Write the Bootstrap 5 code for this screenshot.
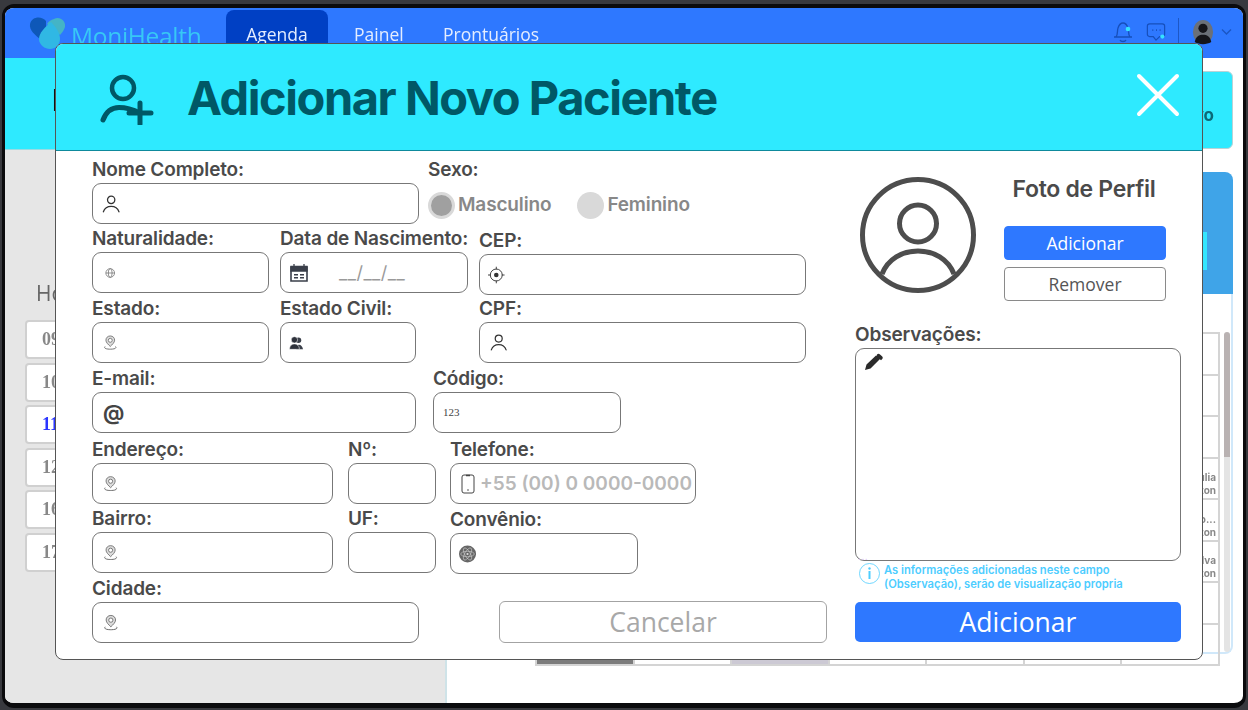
<!DOCTYPE html>
<html lang="pt-BR">
<head>
    <meta charset="UTF-8">
    <meta name="viewport" content="width=device-width, initial-scale=1.0">
    <title>Adicionar Novo Paciente</title>
    <link href="https://cdn.jsdelivr.net/npm/bootstrap@5.3.0/dist/css/bootstrap.min.css" rel="stylesheet">
    <style>
        html, body { height: 100%; }
        body { background: #38393e; overflow: hidden; padding: 4px 2px 2px 2px; font-family: "Inter", sans-serif; }

        /* tela de fundo */
        .screen-frame { position: relative; width: 1244px; height: 704px; border: 3px solid #0b0b0d; border-top-width: 4px; border-bottom-width: 5px; border-radius: 12px; background: #fff; overflow: hidden; }
        .back-layer { height: 100%; filter: blur(.6px); }
        .top-bar { height: 50px; background: #2e78ff; font-family: "Open Sans", sans-serif; font-size: 17.5px; color: #e4edff; }
        .brand-text { font-size: 24.5px; color: #37c8f5; letter-spacing: -.3px; margin-left: 5px; width: 155px; padding-top: 6px; }
        .tab-link { height: 100%; padding-top: 13px; }
        .tab-on { width: 102px; text-align: center; background: #0040c4; border-radius: 8px 8px 0 0; margin-top: 2px; padding-top: 11px; }
        .tab-off1 { margin-left: 26px; width: 89px; }
        .tab-off2 { width: 110px; }
        .top-tools { margin-left: auto; padding: 0 11px 2px 0; height: 100%; }
        .tool-chat { margin-left: 12px; }
        .tool-sep { width: 1px; height: 28px; background: #1d57c6; margin: 0 13px 0 12px; }
        .tool-arrow { margin-left: 7px; }
        .back-body { height: calc(100% - 50px); }
        .side-panel { width: 442px; background: #e6e6e6; border-right: 2px solid #cfe3e8; }
        .side-head { height: 92px; background: #2eeaff; padding: 27px 0 0 47px; color: #111; font-size: 30px; line-height: 30px; font-weight: 700; border-bottom: 1px solid #9adbe3; }
        .side-title { padding: 128px 0 0 31px; font-family: "Open Sans", sans-serif; font-size: 21px; line-height: 30px; color: #666; height: 170px; }
        .slot-list { padding-left: 20px; gap: 3.5px; }
        .slot-item { width: 130px; height: 39px; background: #fff; border: 2px solid #d0d0d0; border-radius: 4px; padding-left: 15px; font-family: "Liberation Serif", serif; font-size: 18px; line-height: 35px; font-weight: 700; color: #888; }
        .slot-now { color: #2a35ff; }
        .main-panel { flex: 1; padding: 13px 10px 0 0; }
        .back-card { height: 78px; margin-left: 20px; background: #2eeaff; border: 1px solid #b9d2d6; border-radius: 6px; text-align: right; padding: 32px 18px 0 0; font-weight: 700; font-size: 17px; line-height: 22px; color: #0b6a78; }
        .back-blue { height: 122px; margin: 23px 0 0 20px; background: #3fa4e8; border-radius: 8px 8px 0 0; display: flex; justify-content: flex-end; padding: 60px 26px 0 0; }
        .back-blue div { width: 10px; height: 38px; background: #34e6ff; }
        .back-white { height: 360px; margin-left: 20px; padding: 38px 1px 0 0; border-right: 2px solid #d0e8fa; border-bottom: 2px solid #d0e8fa; border-radius: 0 0 8px 0; background: #fff; display: flex; align-items: flex-start; gap: 4px; justify-content: flex-end; }
        .cal-grid { table-layout: fixed; width: 685px; border-collapse: collapse; font-size: 10px; line-height: 13px; font-weight: 700; color: #888; }
        .cal-grid td { height: 41.500px; border: 2px solid #d4d4d4; padding: 0 2px; text-align: right; }
        .cal-grid td.cell-name { padding-top: 12px; }
        .cell-dark { background: #7c7c7c; }
        .cell-soft { background: #ccc9d4; }
        .scroll-bar { width: 6px; height: 320px; background: linear-gradient(#b9b2b2 0 125px, #e4e4e4 125px); border-radius: 3px; }

        /* modal */
        .patient-modal { position: absolute; left: 50px; top: 35px; width: 1148px; height: 617px; background: #fff; border: 1px solid #555; border-radius: 8px; overflow: hidden; }
        .modal-top { height: 107px; background: #2eeaff; border-bottom: 1px solid #0e8a9c; padding: 0 22px 0 43px; }
        .modal-name { margin: 0 0 0 32px; font-size: 47px; font-weight: 700; letter-spacing: -1.45px; color: #005866; line-height: 1; }
        .close-x { margin-left: auto; margin-bottom: 5px; background: none; border: 0; padding: 0; line-height: 0; }

        .form-side { width: 772px; padding: 8px 0 0 36px; }
        .form-line { display: flex; }
        .gap-sm { column-gap: 11px; }
        .mt3px { margin-top: 3px; }
        .mt4px { margin-top: 4px; }
        .mt5px { margin-top: 5px; }
        .mt6px { margin-top: 6px; }
        .fld-label { display: block; height: 20px; margin: 0 0 4px; font-size: 19px; line-height: 22px; font-weight: 600; letter-spacing: -.15px; color: #4a4a4a; white-space: nowrap; }
        .fld-box { height: 41px; padding: 0 10px; border: 1px solid #777; border-radius: 9px; gap: 8px; background: #fff; }
        .fld-box .form-control { border: 0; padding: 0; height: 100%; background: transparent; box-shadow: none; min-width: 0; font-family: "Inter", sans-serif; font-size: 20px; font-weight: 600; }
        .fld-box .form-control::placeholder { color: #b9b9b9; }
        .w-327 { width: 327px; }
        .w-177 { width: 177px; }
        .w-188 { width: 188px; }
        .w-136 { width: 136px; }
        .w-324 { width: 324px; }
        .w-241 { width: 241px; }
        .w-88 { width: 88px; }
        .w-246 { width: 246px; }
        .sexo-col { margin-left: 9px; }
        .sexo-line { height: 41px; gap: 26px; padding-top: 4px; }
        .sexo-opt { gap: 3px; margin: 0; padding: 0; color: #888; font-size: 19px; font-weight: 600; letter-spacing: -.15px; }
        .sexo-opt .form-check-input { width: 27px; height: 27px; margin: 0; float: none; background: #d9d9d9; background-image: none; border: 0; opacity: 1; }
        .sexo-opt .form-check-input:checked { background: #a0a0a0; background-image: none; border: 3px solid #d9d9d9; }
        .cep-col { margin-top: 2px; }
        .civil-col { margin-left: 11px; }
        .cpf-col { margin-left: 63px; }
        .cod-col { margin-left: 17px; }
        .nr-col { margin-left: 15px; }
        .tel-col { margin-left: 14px; }
        .conv-col { margin-top: 1px; }
        .ic-nudge { margin-left: 2px; }
        .ic-back { margin-left: -1px; }
        .date-hold { padding-left: 22px; color: #9a9a9a; font-size: 18px; letter-spacing: .5px; }
        .at-mark { font-size: 21px; font-weight: 700; color: #444; line-height: 1; width: 20px; }
        .num-mark { font-family: "Liberation Serif", serif; font-size: 11px; color: #444; margin-left: -1px; }
        .tel-box { padding-right: 2px; gap: 5px; }
        .fld-box.tel-box .form-control { font-size: 19px; }
        .cancel-btn { width: 328px; height: 42px; margin: 23px 0 0 80px; padding: 0; background: #fff; border: 1px solid #a3a3a3; border-radius: 6px; font-family: "Open Sans", sans-serif; font-size: 26.5px; line-height: 38px; color: #a8a8a8; }

        .photo-side { width: 326px; margin-left: 27px; }
        .photo-top { padding: 26px 0 0 5px; height: 173px; }
        .photo-col { width: 162px; margin-left: 28px; }
        .photo-name { font-size: 23px; font-weight: 600; letter-spacing: -.3px; line-height: 24px; color: #4a4a4a; margin: 0 0 25px; padding-right: 2px; text-align: center; }
        .photo-btn { height: 34px; padding: 0; border-radius: 4px; font-family: "Open Sans", sans-serif; font-size: 17.5px; line-height: 32px; }
        .photo-add { background: #2e78ff; border: 1px solid #2e78ff; color: #fff; }
        .photo-del { margin-top: 7px; background: #fff; border: 1px solid #8a8a8a; color: #555; }
        .obs-wrap { position: relative; height: 213px; }
        .obs-area { height: 100%; border: 1px solid #777; border-radius: 9px; resize: none; box-shadow: none; }
        .obs-pen { position: absolute; left: 9px; top: 5px; }
        .obs-dots { position: absolute; left: 3px; bottom: -1px; font-size: 10px; line-height: 12px; color: #dcc3f5; letter-spacing: .5px; }
        .obs-note { height: 41px; padding: 2px 0 0 4px; gap: 4px; font-size: 11.2px; line-height: 14px; font-weight: 600; color: #4dcdff; }
        .obs-send { height: 40px; padding: 0; background: #2e78ff; border: 0; border-radius: 5px; font-family: "Open Sans", sans-serif; font-size: 26.5px; line-height: 38px; color: #fff; }
    </style>
</head>
<body>
    <svg width="0" height="0" class="d-block">
        <symbol id="ic-person" viewBox="0 0 20 20"><circle cx="10" cy="5.500" r="4" fill="none" stroke="#333" stroke-width="1.400"/><path d="M1.500 18.500c1.500-4.500 5-6 8.500-6s7 1.500 8.500 6" fill="none" stroke="#333" stroke-width="1.400" stroke-linecap="round"/></symbol>
        <symbol id="ic-pin" viewBox="0 0 20 20"><path d="M10 1c-3.600 0-6 2.600-6 5.800 0 3.200 3.300 6 6 8.700 2.700-2.700 6-5.500 6-8.700C16 3.600 13.600 1 10 1z" fill="#dcdcdc" stroke="#666" stroke-width="1.100"/><circle cx="10" cy="7" r="2.700" fill="#fff" stroke="#666" stroke-width="1.100"/><path d="M2.800 15.500c-2.300 2.800 2.700 3.700 7.200 3.700s9.500-.9 7.200-3.700" fill="none" stroke="#555" stroke-width="1.100"/></symbol>
    </svg>

    <div class="screen-frame">
        <!-- fundo (agenda) -->
        <div class="back-layer">
            <nav class="top-bar d-flex">
                <div class="d-flex ps-4 align-items-center">
                    <svg width="37" height="34" viewBox="0 0 37 34"><path d="M17 5C13 0 3 0 1 8c-1 6 5 11 11 16l5-8z" fill="#0e58b8"/><path d="M25 3c5-3 12 1 11 8-1 3-3 6-5 8L18 8c2-3 4-4 7-5z" fill="#44b4c6"/><path d="M22 6c5 5 9 11 9 17 0 6-5 10-10 10s-11-4-11-10c0-6 6-12 12-17z" fill="#30b8e4"/></svg>
                    <div class="brand-text">MoniHealth</div>
                </div>
                <div class="tab-link tab-on">Agenda</div>
                <div class="tab-link tab-off1">Painel</div>
                <div class="tab-link tab-off2">Prontuários</div>
                <div class="top-tools d-flex align-items-center">
                    <svg width="22" height="24" viewBox="0 0 22 24"><path d="M4 17c2-2 1-6 2-9 1-3 3-5 5-5s4 2 5 5c1 3 0 7 2 9zM8 20c1 2 5 2 6 0M2 17h18" fill="none" stroke="#164fbb" stroke-width="1.300"/><circle cx="16" cy="9" r="2.300" fill="#35e2ff"/></svg>
                    <svg class="tool-chat" width="20" height="24" viewBox="0 0 22 24"><path d="M4 3h14c1.500 0 2.500 1 2.500 2.500v9c0 1.500-1 2.500-2.500 2.500h-3l-4 4-3-4H4c-1.500 0-2.500-1-2.500-2.500v-9C1.500 4 2.500 3 4 3z" fill="none" stroke="#164fbb" stroke-width="1.300"/><path d="M7 10h1M11 10h1M15 10h1" stroke="#164fbb" stroke-width="2"/><circle cx="18" cy="17" r="2.300" fill="#35e2ff"/></svg>
                    <div class="tool-sep"></div>
                    <svg width="22" height="26" viewBox="0 0 24 26"><ellipse cx="12" cy="13" rx="11" ry="13" fill="#6b7078"/><circle cx="12" cy="9" r="5" fill="#15151a"/><path d="M3 24c1-6 5-8 9-8s8 2 9 8c-5 3-13 3-18 0z" fill="#15151a"/></svg>
                    <svg class="tool-arrow" width="11" height="8" viewBox="0 0 11 8"><path d="M1 1.500l4.500 4.500L10 1.500" fill="none" stroke="#1b56c4" stroke-width="1.400"/></svg>
                </div>
            </nav>
            <div class="back-body d-flex">
                <aside class="side-panel">
                    <div class="side-head">H</div>
                    <div class="side-title">Hora</div>
                    <div class="slot-list d-flex flex-column">
                        <div class="slot-item">09:00</div>
                        <div class="slot-item">10:00</div>
                        <div class="slot-item slot-now">11:00</div>
                        <div class="slot-item">12:00</div>
                        <div class="slot-item">16:00</div>
                        <div class="slot-item">17:00</div>
                    </div>
                </aside>
                <div class="main-panel">
                    <div class="back-card">Novo</div>
                    <div class="back-blue"><div></div></div>
                    <div class="back-white">
                        <table class="cal-grid">
                            <tbody>
                                <tr><td></td><td></td><td></td><td></td><td></td><td></td><td></td></tr>
                                <tr><td></td><td></td><td></td><td></td><td></td><td></td><td></td></tr>
                                <tr><td></td><td></td><td></td><td></td><td></td><td></td><td></td></tr>
                                <tr><td></td><td></td><td></td><td></td><td></td><td></td><td class="cell-name">Júlia<br>Norton</td></tr>
                                <tr><td></td><td></td><td></td><td></td><td></td><td></td><td class="cell-name">João...<br>Norton</td></tr>
                                <tr><td></td><td></td><td></td><td></td><td></td><td></td><td class="cell-name">Silva<br>Norton</td></tr>
                                <tr><td></td><td></td><td></td><td></td><td></td><td></td><td></td></tr>
                                <tr><td class="cell-dark"></td><td></td><td class="cell-soft"></td><td></td><td></td><td></td><td></td></tr>
                            </tbody>
                        </table>
                        <div class="scroll-bar"></div>
                    </div>
                </div>
            </div>
        </div>

        <!-- modal novo paciente -->
        <div class="patient-modal">
            <div class="modal-top d-flex align-items-center">
                <svg width="56" height="56" viewBox="0 0 56 56">
                    <circle cx="24" cy="19" r="11" fill="none" stroke="#005866" stroke-width="4.500"/>
                    <path d="M4 51c3-8 9-12.500 16-12.500 8 0 14 2 21 5.500" fill="none" stroke="#005866" stroke-width="5" stroke-linecap="round"/>
                    <path d="M30 44h22M41 34v21" fill="none" stroke="#005866" stroke-width="5" stroke-linecap="round"/>
                </svg>
                <h1 class="modal-name">Adicionar Novo Paciente</h1>
                <button type="button" class="close-x" aria-label="Fechar">
                    <svg width="44" height="44" viewBox="0 0 44 44"><path d="M3 3l38 38M41 3L3 41" stroke="#fff" stroke-width="4" stroke-linecap="round"/></svg>
                </button>
            </div>
            <div class="d-flex">
                <form class="form-side">
                    <div class="form-line">
                        <div class="w-327">
                            <label class="fld-label">Nome Completo:</label>
                            <div class="fld-box d-flex align-items-center"><svg class="ic-back" width="20" height="20"><use href="#ic-person"/></svg><input class="form-control" type="text"></div>
                        </div>
                        <div class="sexo-col">
                            <label class="fld-label">Sexo:</label>
                            <div class="sexo-line d-flex align-items-center">
                                <label class="sexo-opt form-check d-flex align-items-center"><input class="form-check-input" type="radio" name="sexo" checked>Masculino</label>
                                <label class="sexo-opt form-check d-flex align-items-center"><input class="form-check-input" type="radio" name="sexo">Feminino</label>
                            </div>
                        </div>
                    </div>
                    <div class="form-line gap-sm mt4px">
                        <div class="w-177">
                            <label class="fld-label">Naturalidade:</label>
                            <div class="fld-box d-flex align-items-center">
                                <svg class="ic-nudge" width="12" height="12" viewBox="0 0 12 12"><circle cx="6" cy="6" r="5" fill="none" stroke="#666" stroke-width=".8"/><ellipse cx="6" cy="6" rx="2.200" ry="5" fill="none" stroke="#666" stroke-width=".8"/><path d="M1 6h10" stroke="#666" stroke-width=".8"/></svg>
                                <input class="form-control" type="text">
                            </div>
                        </div>
                        <div class="w-188">
                            <label class="fld-label">Data de Nascimento:</label>
                            <div class="fld-box d-flex align-items-center ps-2">
                                <svg width="20" height="20" viewBox="0 0 20 20"><path d="M2 4h16v14H2z" fill="none" stroke="#3a3f4a" stroke-width="1.600"/><path d="M2 3.500h16V8H2zM5 1v3M15 1v3" fill="#3a3f4a" stroke="#3a3f4a" stroke-width="1.300"/><path d="M5 11h4v1.500H5zM11 11h4v1.500h-4zM5 14h4v1.500H5zM11 14h4v1.500h-4z" fill="#3a3f4a"/></svg>
                                <span class="date-hold">__/__/__</span>
                            </div>
                        </div>
                        <div class="w-327 cep-col">
                            <label class="fld-label">CEP:</label>
                            <div class="fld-box d-flex align-items-center ps-2">
                                <svg width="18" height="18" viewBox="0 0 18 18"><circle cx="9" cy="9" r="6.500" fill="none" stroke="#333" stroke-width="1"/><circle cx="9" cy="9" r="2.500" fill="#333"/><path d="M9 0v3M9 15v3M0 9h3M15 9h3" stroke="#333" stroke-width="1"/></svg>
                                <input class="form-control" type="text">
                            </div>
                        </div>
                    </div>
                    <div class="form-line mt3px">
                        <div class="w-177">
                            <label class="fld-label">Estado:</label>
                            <div class="fld-box d-flex align-items-center"><svg width="17" height="17"><use href="#ic-pin"/></svg><input class="form-control" type="text"></div>
                        </div>
                        <div class="w-136 civil-col">
                            <label class="fld-label">Estado Civil:</label>
                            <div class="fld-box d-flex align-items-center ps-2">
                                <svg width="18" height="18" viewBox="0 0 16 16"><circle cx="10.500" cy="5" r="3" fill="#3a3f4a"/><path d="M8 15c0-3 1-5 3-5s4 2 4.500 5z" fill="#3a3f4a"/><circle cx="6" cy="4.500" r="3.500" fill="#2d313b" stroke="#fff" stroke-width=".6"/><path d="M.5 15c0-4 2.500-6 5.500-6s5.500 2 5.500 6z" fill="#2d313b" stroke="#fff" stroke-width=".6"/></svg>
                                <input class="form-control" type="text">
                            </div>
                        </div>
                        <div class="w-327 cpf-col">
                            <label class="fld-label">CPF:</label>
                            <div class="fld-box d-flex align-items-center"><svg width="19" height="19"><use href="#ic-person"/></svg><input class="form-control" type="text"></div>
                        </div>
                    </div>
                    <div class="form-line mt5px">
                        <div class="w-324">
                            <label class="fld-label">E-mail:</label>
                            <div class="fld-box d-flex align-items-center"><span class="at-mark">@</span><input class="form-control" type="text"></div>
                        </div>
                        <div class="w-188 cod-col">
                            <label class="fld-label">Código:</label>
                            <div class="fld-box d-flex align-items-center"><span class="num-mark">123</span><input class="form-control" type="text"></div>
                        </div>
                    </div>
                    <div class="form-line mt6px">
                        <div class="w-241">
                            <label class="fld-label">Endereço:</label>
                            <div class="fld-box d-flex align-items-center"><svg width="17" height="17"><use href="#ic-pin"/></svg><input class="form-control" type="text"></div>
                        </div>
                        <div class="w-88 nr-col">
                            <label class="fld-label">Nº:</label>
                            <div class="fld-box d-flex align-items-center"><input class="form-control" type="text"></div>
                        </div>
                        <div class="w-246 tel-col">
                            <label class="fld-label">Telefone:</label>
                            <div class="fld-box d-flex align-items-center tel-box">
                                <svg class="flex-shrink-0" width="14" height="20" viewBox="0 0 14 20"><rect x="1" y="1" width="12" height="18" rx="2" fill="none" stroke="#444" stroke-width="1"/><path d="M5 1.500h4" stroke="#444" stroke-width="1.500"/><circle cx="7" cy="16" r=".8" fill="#444"/></svg>
                                <input class="form-control" type="text" placeholder="+55 (00) 0 0000-0000">
                            </div>
                        </div>
                    </div>
                    <div class="form-line mt4px">
                        <div class="w-241">
                            <label class="fld-label">Bairro:</label>
                            <div class="fld-box d-flex align-items-center"><svg width="17" height="17"><use href="#ic-pin"/></svg><input class="form-control" type="text"></div>
                        </div>
                        <div class="w-88 nr-col">
                            <label class="fld-label">UF:</label>
                            <div class="fld-box d-flex align-items-center"><input class="form-control" type="text"></div>
                        </div>
                        <div class="w-188 tel-col conv-col">
                            <label class="fld-label">Convênio:</label>
                            <div class="fld-box d-flex align-items-center ps-2">
                                <svg width="20" height="20" viewBox="0 0 20 20"><circle cx="10" cy="10" r="10" fill="#666"/><g fill="none" stroke="#cfcfcf" stroke-width=".7"><ellipse cx="10" cy="10" rx="8" ry="3.200"/><ellipse cx="10" cy="10" rx="8" ry="3.200" transform="rotate(60 10 10)"/><ellipse cx="10" cy="10" rx="8" ry="3.200" transform="rotate(120 10 10)"/></g><circle cx="10" cy="10" r="1.300" fill="#ddd"/></svg>
                                <input class="form-control" type="text">
                            </div>
                        </div>
                    </div>
                    <div class="form-line mt4px">
                        <div class="w-327">
                            <label class="fld-label">Cidade:</label>
                            <div class="fld-box d-flex align-items-center"><svg width="17" height="17"><use href="#ic-pin"/></svg><input class="form-control" type="text"></div>
                        </div>
                        <button type="button" class="btn cancel-btn">Cancelar</button>
                    </div>
                </form>
                <div class="photo-side">
                    <div class="photo-top d-flex">
                        <svg width="116" height="116" viewBox="0 0 116 116">
                            <circle cx="58" cy="58" r="55.500" fill="none" stroke="#4d4d4d" stroke-width="5"/>
                            <circle cx="58" cy="46.500" r="18.500" fill="none" stroke="#4d4d4d" stroke-width="5"/>
                            <path d="M22 97c6-15 20-23 36-23s30 8 36 23" fill="none" stroke="#4d4d4d" stroke-width="5"/>
                        </svg>
                        <div class="photo-col d-flex flex-column">
                            <div class="photo-name">Foto de Perfil</div>
                            <button type="button" class="btn photo-btn photo-add">Adicionar</button>
                            <button type="button" class="btn photo-btn photo-del">Remover</button>
                        </div>
                    </div>
                    <label class="fld-label">Observações:</label>
                    <div class="obs-wrap">
                        <textarea class="form-control obs-area"></textarea>
                        <svg class="obs-pen" width="20" height="18" viewBox="0 0 20 18"><path d="M1 17l1.500-5.500L12 2.500l4 3.500-9.500 9.500zM13 1.500c1-1 2-1 3 0l2 1.800c1 1 1 2 0 3l-1 1-4.500-4z" fill="#2a2a2a"/></svg>
                        <span class="obs-dots">...</span>
                    </div>
                    <div class="obs-note d-flex">
                        <svg width="21" height="21" viewBox="0 0 21 21" class="flex-shrink-0"><circle cx="10.500" cy="10.500" r="10" fill="none" stroke="#4dcdff" stroke-width=".8"/><path d="M10.500 8v8" stroke="#4dcdff" stroke-width="2"/><circle cx="10.500" cy="5.500" r="1.200" fill="#4dcdff"/></svg>
                        <div>As informações adicionadas neste campo<br>(Observação), serão de visualização propria</div>
                    </div>
                    <button type="button" class="btn obs-send w-100">Adicionar</button>
                </div>
            </div>
        </div>
    </div>
    <script src="https://cdn.jsdelivr.net/npm/bootstrap@5.3.0/dist/js/bootstrap.bundle.min.js"></script>
</body>
</html>
